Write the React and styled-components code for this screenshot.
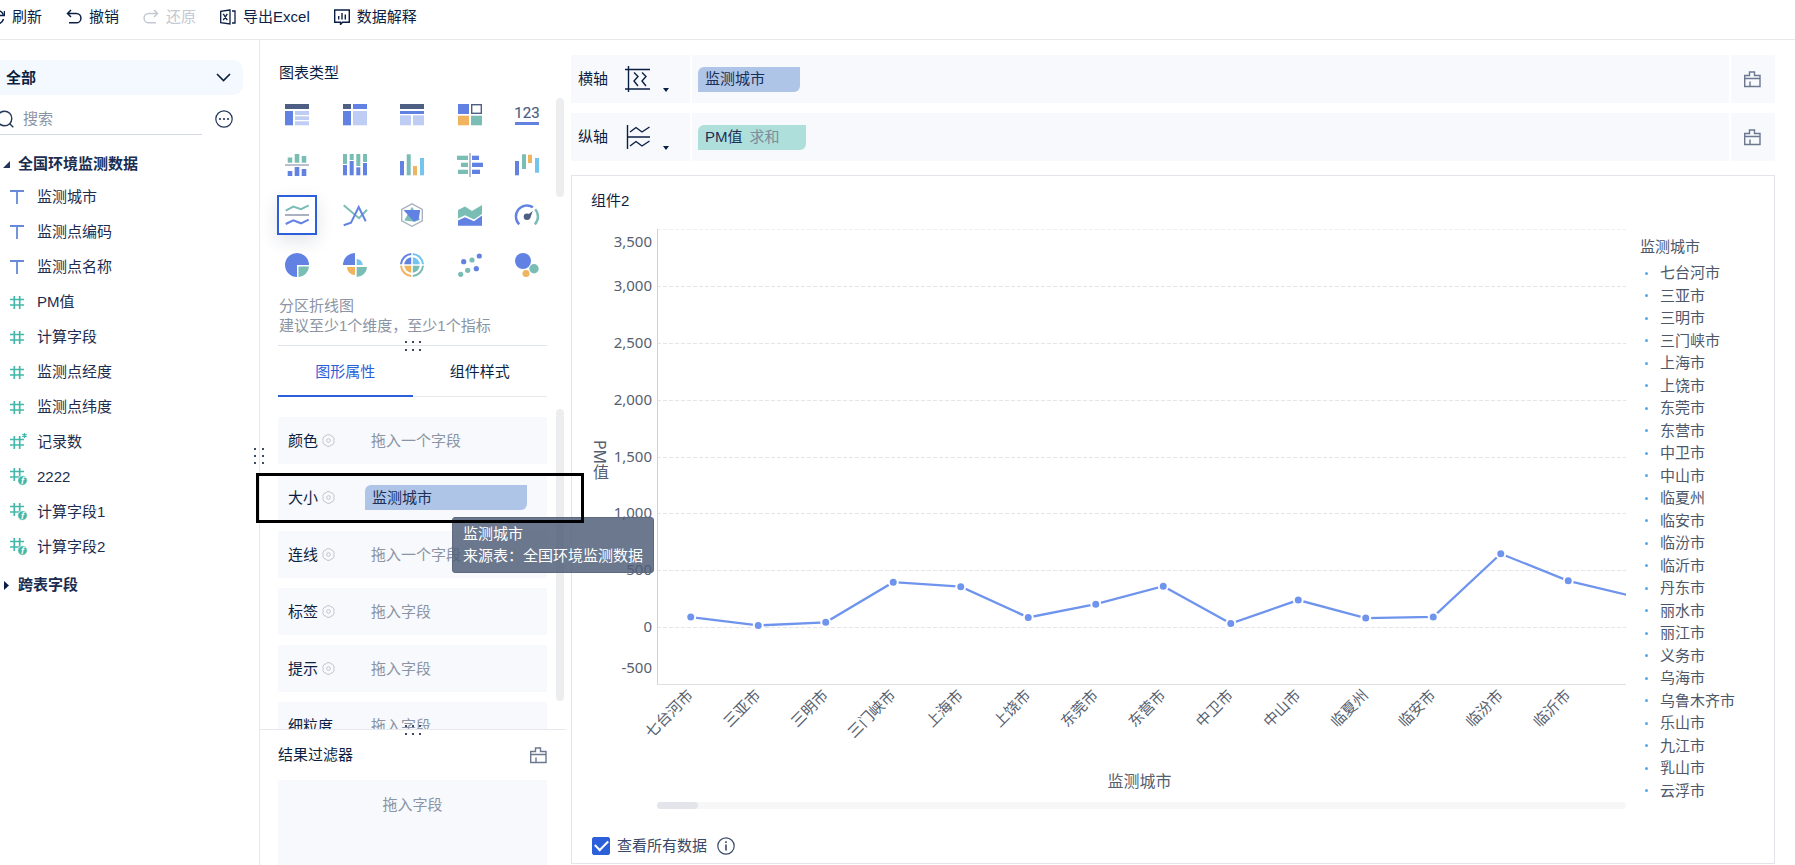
import React from "react";
import styled, { createGlobalStyle, css } from "styled-components";

const color = {
  ink: "#0b1f44",
  inkSoft: "#3a4a66",
  muted: "#8a94a5",
  disabled: "#c3c8d1",
  line: "#e6e8ec",
  panel: "#f7f9fc",
  primary: "#2c60db",
  blue: "#6282e3",
  light: "#bfcdf5",
  dark: "#4e5f84",
  teal: "#7abdb4",
  orange: "#f0b45e",
  sky: "#73c4ef",
  grey: "#a9b1c2",
};

const GlobalStyle = createGlobalStyle`
  * { box-sizing: border-box; }
  body {
    margin: 0;
    background: #fff;
    color: ${color.ink};
    font-family: "Liberation Sans", "Noto Sans CJK SC", sans-serif;
    font-size: 15px;
    line-height: 20px;
  }
  button, input, select { font: inherit; color: inherit; }
  ul, h2, h3, p { margin: 0; padding: 0; font: inherit; list-style: none; }
  svg { display: block; flex: none; }
`;

/* ---------- shared parts ---------- */

const PlainButton = styled.button`
  display: flex;
  align-items: center;
  padding: 0;
  border: 0;
  background: none;
  cursor: pointer;
`;

const Page = styled.div`
  display: flex;
  flex-direction: column;
  height: 100vh;
  min-height: 860px;
  overflow: hidden;
`;

const Main = styled.main`
  display: flex;
  flex: 1;
  min-height: 0;
`;

const HandleGrid = styled.span`
  position: absolute;
  z-index: 2;
  display: grid;
  grid-template-columns: repeat(${(p) => (p.$upright ? 2 : 3)}, 2px);
  gap: ${(p) => (p.$upright ? "5px 6px" : "6px 5px")};
  ${(p) =>
    p.$upright
      ? css`left: -6px; top: 408px;`
      : css`left: 50%; bottom: -6px; transform: translateX(-50%);`}
  & > i { width: 2px; height: 2px; background: ${color.inkSoft}; }
`;

const Handle = ({ upright }) => (
  <HandleGrid $upright={upright}>
    {Array.from({ length: 6 }, (_, i) => <i key={i} />)}
  </HandleGrid>
);

const ScrollThumb = styled.div`
  width: 8px;
  height: ${(p) => p.$length}px;
  margin-top: ${(p) => p.$top}px;
  border-radius: 4px;
  background: #ecedef;
`;

const CleanIcon = () => (
  <svg width="17" height="17" viewBox="0 0 17 17" fill="none" stroke="#6b7890" strokeWidth="1.4">
    <path d="M5.500 4.500V1h5v3.500H16V15.500H.7V4.500zM.7 7.500H16M6 10.500v5" />
  </svg>
);

/* ---------- toolbar ---------- */

const Toolbar = styled.header`
  display: flex;
  align-items: center;
  gap: 24px;
  height: 40px;
  padding-bottom: 5px;
  margin-left: -11px;
  border-bottom: 1px solid ${color.line};
`;

const ToolButton = styled(PlainButton)`
  gap: 7px;
  color: ${color.ink};
  white-space: nowrap;
  &:disabled { color: ${color.disabled}; cursor: default; }
`;

const ToolSvg = (props) => (
  <svg width="16" height="16" viewBox="0 0 16 16" fill="none" stroke="currentColor" strokeWidth="1.500" {...props} />
);

const tools = [
  {
    label: "刷新",
    icon: <ToolSvg><path d="M14.200 5.500A7 7 0 1 0 14.500 10M15.500 2v4.500h-4.500" /></ToolSvg>,
  },
  {
    label: "撤销",
    icon: <ToolSvg><path d="M5 1 1.500 4.500 5 8M1.500 4.500h8.800a4.600 4.600 0 0 1 0 9.300H3" /></ToolSvg>,
  },
  {
    label: "还原",
    disabled: true,
    icon: <ToolSvg><path d="M11 1l3.500 3.500L11 8M14.500 4.500H5.700a4.600 4.600 0 0 0 0 9.300H13" /></ToolSvg>,
  },
  {
    label: "导出Excel",
    icon: (
      <ToolSvg strokeWidth="1.300">
        <path d="M10 1 .7 2.300v11.400L10 15zM3.300 4.800l4 6.400M7.300 4.800l-4 6.400M12 2h3v12h-3" />
      </ToolSvg>
    ),
  },
  {
    label: "数据解释",
    icon: (
      <ToolSvg strokeWidth="1.400">
        <path d="M.7 1h14.600v12.300H8.500L6.500 15.500v-2.200H.7zM4.700 7v3.500M8 4v6.500M11.300 5.500v5" />
      </ToolSvg>
    ),
  },
];

/* ---------- field sidebar ---------- */

const Sidebar = styled.aside`
  flex: none;
  width: 260px;
  padding-top: 20px;
  border-right: 1px solid ${color.line};
  overflow: hidden;
`;

const ScopeBox = styled.label`
  display: flex;
  align-items: center;
  position: relative;
  height: 35px;
  margin-right: 16px;
  border-radius: 0 10px 10px 0;
  background: #f3f9fe;
  & > svg { position: absolute; right: 12px; pointer-events: none; }
`;

const ScopeSelect = styled.select`
  flex: 1;
  height: 35px;
  padding: 0 6px;
  border: 0;
  background: none;
  appearance: none;
  font-weight: 700;
`;

const SearchRow = styled.div`
  display: flex;
  align-items: center;
  justify-content: space-between;
  height: 32px;
  margin: 8px 26px 0 0;
`;

const SearchBox = styled.label`
  display: flex;
  align-items: center;
  gap: 9px;
  width: 202px;
  height: 32px;
  border-bottom: 1px solid #d5dae2;
  & > svg { margin-left: -4px; }
`;

const SearchInput = styled.input`
  flex: 1;
  min-width: 0;
  padding: 0;
  border: 0;
  outline: 0;
  background: none;
  &::placeholder { color: ${color.muted}; opacity: 1; }
`;

const GroupTitle = styled(PlainButton)`
  gap: 8px;
  height: 30px;
  margin-top: ${(p) => p.$gap}px;
  padding-left: 3px;
  color: #1a2c50;
  font-weight: 700;
  & > svg { width: 7px; }
`;

const FieldItem = styled.li`
  display: flex;
  align-items: center;
  gap: 9px;
  height: 35px;
  padding-left: 10px;
  color: #1c2d50;
`;

const HASH = "#44b8a8";

const FieldIcon = ({ kind }) => {
  if (kind === "text")
    return (
      <svg width="18" height="18" viewBox="0 0 18 18" fill="none" stroke="#6689d8" strokeWidth="1.800">
        <path d="M0 3h14M7 3v13" />
      </svg>
    );
  const up = kind === "calc" ? -3 : 0;
  return (
    <svg width="18" height="18" viewBox="0 0 18 18" fill="none" stroke={HASH} strokeWidth="1.700">
      <path d="M0 6.500h14M0 12h14M4.300 3v13M9.700 3v13" transform={`translate(0 ${up})`} />
      {kind === "count" && <path strokeWidth="1.200" d="M14.500 0v5M12.300 1.200l4.400 2.600M16.700 1.200l-4.400 2.600" />}
      {kind === "calc" && (
        <>
          <circle cx="12.500" cy="12.500" r="4.800" fill={HASH} stroke="#fff" strokeWidth="0.800" />
          <text x="12.500" y="15.500" textAnchor="middle" fontSize="9" fontWeight="700" fontStyle="italic" fill="#fff" stroke="none">f</text>
        </>
      )}
    </svg>
  );
};

const fields = [
  ["text", "监测城市"],
  ["text", "监测点编码"],
  ["text", "监测点名称"],
  ["number", "PM值"],
  ["number", "计算字段"],
  ["number", "监测点经度"],
  ["number", "监测点纬度"],
  ["count", "记录数"],
  ["calc", "2222"],
  ["calc", "计算字段1"],
  ["calc", "计算字段2"],
];

const FieldSidebar = () => (
  <Sidebar>
    <ScopeBox aria-label="字段范围">
      <ScopeSelect defaultValue="全部"><option>全部</option></ScopeSelect>
      <svg width="15" height="9" viewBox="0 0 15 9" fill="none" stroke={color.ink} strokeWidth="1.600">
        <path d="M1 1l6.500 6.500L14 1" />
      </svg>
    </ScopeBox>
    <SearchRow>
      <SearchBox>
        <svg width="18" height="18" viewBox="0 0 18 18" fill="none" stroke="#24365a" strokeWidth="1.400">
          <circle cx="8.500" cy="8.500" r="7.300" />
          <path d="M13.500 13.500l3.800 3.800" />
        </svg>
        <SearchInput placeholder="搜索" aria-label="搜索" />
      </SearchBox>
      <PlainButton aria-label="更多">
        <svg width="18" height="18" viewBox="0 0 18 18" fill="none" stroke="#24365a" strokeWidth="1.200">
          <circle cx="9" cy="9" r="8.200" />
          <g fill="#24365a" stroke="none">
            <circle cx="5" cy="9" r="1.100" /><circle cx="9" cy="9" r="1.100" /><circle cx="13" cy="9" r="1.100" />
          </g>
        </svg>
      </PlainButton>
    </SearchRow>
    <GroupTitle $gap={14}>
      <svg width="7" height="7" viewBox="0 0 7 7"><path d="M7 0v7H0z" fill="#24365a" /></svg>
      全国环境监测数据
    </GroupTitle>
    <ul>
      {fields.map(([kind, name]) => (
        <FieldItem key={name}><FieldIcon kind={kind} />{name}</FieldItem>
      ))}
    </ul>
    <GroupTitle $gap={6}>
      <svg width="7" height="9" viewBox="0 0 7 9"><path d="M1 0l5 4.500L1 9z" fill={color.ink} /></svg>
      跨表字段
    </GroupTitle>
  </Sidebar>
);

/* ---------- chart type picker ---------- */

const Bars = ({ list }) => list.map(([x, y, w, h, c], i) => <rect key={i} x={x} y={y} width={w} height={h} fill={color[c]} />);

const chartTypes = [
  ["分组表", <Bars list={[[0, 1, 24, 5, "dark"], [0, 8, 8, 14.300, "blue"], [10, 8, 14, 4, "light"], [10, 13.300, 14, 3.700, "light"], [10, 18.300, 14, 4, "light"]]} />],
  ["交叉表", <Bars list={[[0, 1, 8, 5, "dark"], [10, 1, 14, 5, "blue"], [0, 8, 8, 14.300, "blue"], [10, 8, 14, 14.300, "light"]]} />],
  ["明细表", <Bars list={[[0, 1, 24, 5, "dark"], [0, 8, 24, 3, "blue"], [0, 12.300, 11, 10, "light"], [13, 12.300, 11, 10, "light"]]} />],
  ["颜色表格", <>
    <Bars list={[[0, 1, 11, 10, "blue"], [0, 12.700, 11, 9.600, "orange"], [13, 12.700, 11, 9.600, "teal"]]} />
    <rect x="13.700" y="1.700" width="9.600" height="8.600" fill="none" stroke={color.dark} strokeWidth="1.400" />
  </>],
  ["指标卡", <>
    <text x="12" y="15" textAnchor="middle" fontFamily="'Liberation Sans Narrow', Roboto, sans-serif" fontSize="15" fill={color.dark} stroke={color.dark} strokeWidth="0.200">123</text>
    <rect y="19" width="24" height="3" fill={color.blue} />
  </>],
  ["分区柱形图", <Bars list={[[2.700, 4.500, 4.600, 5.200, "teal"], [9.700, 1, 4.600, 8.700, "teal"], [16.700, 3, 4.600, 6.700, "teal"], [0, 11.200, 24, 1.600, "grey"], [2.700, 18, 4.600, 5, "blue"], [9.700, 14, 4.600, 9, "blue"], [16.700, 16, 4.600, 7, "blue"]]} />],
  ["堆积柱形图", <Bars list={[[0, 1, 4, 10, "teal"], [0, 12, 4, 10.300, "blue"], [6.700, 1, 4, 6, "teal"], [6.700, 8, 4, 14.300, "blue"], [13.300, 1, 4, 12, "teal"], [13.300, 14.300, 4, 8, "blue"], [20, 1, 4, 8, "teal"], [20, 10, 4, 12.300, "blue"]]} />],
  ["多系列柱形图", <Bars list={[[0, 8, 4, 14.300, "blue"], [6.700, 1.300, 4, 21, "teal"], [13, 13, 4, 9.300, "orange"], [20, 5, 4, 17.300, "sky"]]} />],
  ["对比柱状图", <Bars list={[[-1, 2.700, 11, 4.300, "teal"], [3, 9.700, 7, 4.300, "teal"], [0, 16.700, 10, 4.300, "teal"], [11.200, 0, 1.600, 24, "grey"], [14, 2.700, 7, 4.300, "blue"], [14, 9.700, 11, 4.300, "blue"], [14, 16.700, 8, 4.300, "blue"]]} />],
  ["瀑布图", <Bars list={[[0, 8, 4, 14.300, "blue"], [7, 1.300, 4, 14.700, "teal"], [13, 1.700, 4, 8.300, "orange"], [20, 5, 4, 14.700, "sky"]]} />],
  ["分区折线图", <g fill="none" strokeWidth="2">
    <path stroke={color.teal} d="M.7 7.700l7.600-4.200 7.700 2.700 7.700-3.900" />
    <path stroke={color.grey} d="M0 12h24" />
    <path stroke={color.blue} d="M.7 21l7.600-3.700 7.700 3 7.700-3.600" />
  </g>],
  ["多系列折线图", <g fill="none" strokeWidth="2">
    <path stroke={color.teal} d="M.7 2.300l15.300 12.900 8-8.500" />
    <path stroke={color.blue} d="M.7 22.300l7.300-2.600 7.700-15.700 7 14.300" />
  </g>],
  ["雷达图", <>
    <path fill="none" stroke={color.grey} strokeWidth="1.400" d="M12 .8l10.300 5.500v11.500L12 23.300 1.700 17.800V6.300z" />
    <path fill={color.teal} d="M12 3.700l8 13-5 2-10.700-1.200z" />
    <path fill={color.blue} d="M3.500 7h16.700l-1.500 9.500-5 2z" />
  </>],
  ["面积图", <>
    <path fill={color.teal} d="M0 7l7-3.500 7 4.500 10-6v9l-8 5.500-9-4.200-7 3.200z" />
    <path fill={color.blue} d="M0 17.500l7-3.300 9 4 8-5.700v10.200H0z" />
  </>],
  ["仪表盘", <>
    <g fill="none" strokeWidth="2.400">
      <path stroke={color.blue} d="M4.200 21.300A11 11 0 0 1 18 4.300" />
      <path stroke={color.teal} d="M20.200 6.300A11 11 0 0 1 19.800 21.300" />
    </g>
    <path fill={color.dark} d="M17.800 8l-2.700 7.300-3-3z" />
    <circle cx="12" cy="13.700" r="3.300" fill={color.dark} />
  </>],
  ["饼图", <>
    <path fill={color.blue} d="M24 12A12 12 0 1 0 12 24V12z" />
    <path fill={color.teal} d="M13.500 13.500H24A11 11 0 0 1 13.500 24z" />
  </>],
  ["玫瑰图", <>
    <path fill={color.blue} d="M12 12H0A12 12 0 0 1 12 0z" />
    <path fill={color.sky} d="M13.700 12V6a6 6 0 0 1 6 6z" />
    <path fill={color.orange} d="M12 14v8a8 8 0 0 1-8-8z" />
    <path fill={color.teal} d="M13.700 14H24A10.300 10.300 0 0 1 13.700 24z" />
  </>],
  ["多层饼图", <>
    {[["blue", 0], ["sky", 90], ["teal", 180], ["orange", 270]].map(([c, a]) => (
      <g key={c} transform={`rotate(${a} 12 12)`}>
        <path fill={color[c]} d="M11.200 11.200H4.300A7.500 7.500 0 0 1 11.200 4.300z" />
        <path fill="none" stroke={color[c]} strokeWidth="2" d="M1 11.200A11 11 0 0 1 11.200 1" />
      </g>
    ))}
  </>],
  ["散点图", <>
    {[[2.700, 21.300, "teal"], [9.700, 17.300, "teal"], [18.300, 15.700, "blue"], [5.700, 8.700, "blue"], [14, 7, "teal"], [21.300, 3, "blue"]].map(([x, y, c]) => (
      <circle key={x} cx={x} cy={y} r="2.600" fill={color[c]} />
    ))}
  </>],
  ["聚合气泡图", <>
    <circle cx="8" cy="8" r="8" fill={color.blue} />
    <circle cx="19" cy="15.700" r="4.700" fill={color.teal} />
    <circle cx="11" cy="20.500" r="3.500" fill={color.orange} />
  </>],
];

const ConfigColumn = styled.section`
  position: relative;
  display: flex;
  flex-direction: column;
  flex: none;
  width: 311px;
`;

const TypeSection = styled.div`
  padding: 23px 7px 0 17px;
`;

const SectionTitle = styled.h2`
  padding-left: 2px;
`;

const ScrollRow = styled.div`
  display: flex;
  justify-content: space-between;
`;

const TypeGrid = styled.div`
  display: grid;
  grid-template-columns: repeat(5, 40px);
  justify-content: space-between;
  row-gap: 10px;
  width: 270px;
  margin-top: 12px;
`;

const TypeButton = styled(PlainButton)`
  justify-content: center;
  width: 40px;
  height: 40px;
  border: 2px solid ${(p) => (p.$active ? color.primary : "transparent")};
  box-shadow: ${(p) => (p.$active ? "0 6px 18px rgba(9, 30, 64, 0.12)" : "none")};
  & > svg { overflow: visible; }
`;

const Hint = styled.p`
  position: relative;
  width: 269px;
  margin: 11px 0 0 1px;
  padding: 0 1px 9px;
  border-bottom: 1px solid #dfe4ea;
  color: ${color.muted};
`;

const TabBar = styled.div`
  display: flex;
  width: 269px;
  margin-left: 18px;
  box-shadow: inset 0 -1px ${color.line};
`;

const Tab = styled(PlainButton)`
  flex: 1;
  justify-content: center;
  height: 51px;
  padding-top: 2px;
  border-bottom: 2px solid ${(p) => (p.$active ? color.primary : "transparent")};
  color: ${(p) => (p.$active ? color.primary : color.ink)};
`;

const PropsArea = styled.div`
  position: relative;
  flex: 1;
  min-height: 0;
  border-bottom: 1px solid ${color.line};
  margin-right: 5px;
`;

const PropsScroll = styled.div`
  display: flex;
  justify-content: space-between;
  height: 100%;
  padding: 0 2px 0 18px;
  overflow: hidden;
`;

const PropsList = styled.div`
  display: flex;
  flex-direction: column;
  gap: 10px;
  width: 269px;
  padding-top: 20px;
`;

const PropRow = styled.div`
  display: flex;
  flex: none;
  align-items: center;
  height: 47px;
  padding: 0 20px 0 10px;
  background: ${color.panel};
`;

const PropLabel = styled.span`
  display: flex;
  align-items: center;
  gap: 4px;
  width: 77px;
  white-space: nowrap;
`;

const Placeholder = styled.span`
  padding-left: 6px;
  color: ${color.muted};
`;

const Tag = styled(PlainButton)`
  gap: 7px;
  height: 25px;
  width: ${(p) => (p.$width ? `${p.$width}px` : "auto")};
  flex: ${(p) => (p.$width ? "none" : 1)};
  padding-left: 7px;
  border-radius: 6px 0 6px 0;
  background: ${(p) => (p.$measure ? "#aedfda" : "#afc5e8")};
  color: #1c2f57;
  & > small { font-size: 15px; color: #7d8b9c; }
`;

/* Six rounded teeth: two outer points per tooth with a shallow notch between teeth. */
const gearPath = `M${Array.from({ length: 18 }, (_, i) => {
  const degrees = Math.floor(i / 3) * 60 + [15, 45, 60][i % 3];
  const radius = [6, 6, 5.200][i % 3];
  const angle = (degrees * Math.PI) / 180;
  return `${(6.500 + radius * Math.cos(angle)).toFixed(2)} ${(6.500 + radius * Math.sin(angle)).toFixed(2)}`;
}).join("L")}z`;

const GearIcon = () => (
  <svg width="13" height="13" viewBox="0 0 13 13" fill="none" stroke="#bfc5cf" strokeWidth="1" strokeLinejoin="round">
    <path d={gearPath} />
    <circle cx="6.500" cy="6.500" r="1.800" />
  </svg>
);

const chartProps = [
  { label: "颜色", hint: "拖入一个字段" },
  { label: "大小", tag: "监测城市" },
  { label: "连线", hint: "拖入一个字段" },
  { label: "标签", hint: "拖入字段" },
  { label: "提示", hint: "拖入字段" },
  { label: "细粒度", hint: "拖入字段", plain: true },
];

const Highlight = styled.div`
  position: absolute;
  z-index: 4;
  left: -4px;
  top: 76px;
  width: 328px;
  height: 50px;
  border: 3px solid #000;
  pointer-events: none;
`;

const Tooltip = styled.div`
  position: absolute;
  z-index: 3;
  left: 192px;
  top: 120px;
  padding: 5px 10px;
  border: 1px solid #5e6a80;
  border-radius: 3px;
  background: rgba(79, 94, 119, 0.84);
  color: #fff;
  line-height: 22px;
  white-space: nowrap;
`;

const FilterSection = styled.div`
  padding: 15px 24px 0 18px;
`;

const FilterHead = styled.div`
  display: flex;
  align-items: center;
  justify-content: space-between;
`;

const FilterDrop = styled.div`
  height: 85px;
  margin-top: 15px;
  padding-top: 15px;
  background: ${color.panel};
  color: ${color.muted};
  text-align: center;
`;

const Config = () => (
  <ConfigColumn>
    <Handle upright />
    <TypeSection>
      <SectionTitle>图表类型</SectionTitle>
      <ScrollRow>
        <TypeGrid>
          {chartTypes.map(([name, art]) => (
            <TypeButton key={name} aria-label={name} $active={name === "分区折线图"}>
              <svg width="24" height="24" viewBox="0 0 24 24">{art}</svg>
            </TypeButton>
          ))}
        </TypeGrid>
        <ScrollThumb $length={99} $top={15} />
      </ScrollRow>
      <Hint>
        分区折线图<br />建议至少1个维度，至少1个指标
        <Handle />
      </Hint>
    </TypeSection>
    <TabBar>
      <Tab $active>图形属性</Tab>
      <Tab>组件样式</Tab>
    </TabBar>
    <PropsArea>
      <PropsScroll>
        <PropsList>
          {chartProps.map(({ label, hint, tag, plain }) => (
            <PropRow key={label}>
              <PropLabel>{label}{!plain && <GearIcon />}</PropLabel>
              {tag ? <Tag>{tag}</Tag> : <Placeholder>{hint}</Placeholder>}
            </PropRow>
          ))}
        </PropsList>
        <ScrollThumb $length={292} $top={12} />
      </PropsScroll>
      <Handle />
      <Tooltip role="tooltip">监测城市<br />来源表：全国环境监测数据</Tooltip>
      <Highlight />
    </PropsArea>
    <FilterSection>
      <FilterHead>
        <h2>结果过滤器</h2>
        <PlainButton aria-label="清空过滤器"><CleanIcon /></PlainButton>
      </FilterHead>
      <FilterDrop>拖入字段</FilterDrop>
    </FilterSection>
  </ConfigColumn>
);

/* ---------- axis rows ---------- */

const Workspace = styled.section`
  display: flex;
  flex-direction: column;
  flex: 1;
  min-width: 0;
  padding: 15px 20px 1px 0;
`;

const AxisRow = styled.div`
  display: flex;
  height: 48px;
  margin-bottom: ${(p) => p.$gap}px;
  background: ${color.panel};
`;

const AxisCell = styled.div`
  display: flex;
  align-items: center;
  flex: none;
  gap: 17px;
  width: 121px;
  padding-left: 7px;
  border-right: 2px solid #fff;
`;

const AxisMode = styled(PlainButton)`
  gap: 12px;
  align-items: flex-end;
`;

const DropZone = styled.div`
  display: flex;
  align-items: center;
  flex: 1;
  padding-left: 6px;
`;

const ClearCell = styled.div`
  display: grid;
  place-content: center;
  width: 46px;
  padding-right: 2px;
  border-left: 2px solid #fff;
`;

const AxisLine = ({ label, art, gap, children }) => (
  <AxisRow $gap={gap}>
    <AxisCell>
      {label}
      <AxisMode aria-label={`${label}设置`}>
        <svg width="26" height="26" viewBox="0 0 26 26" fill="none" stroke={color.ink} strokeWidth="1.400">{art}</svg>
        <svg width="6" height="4" viewBox="0 0 6 4"><path d="M0 0h6L3 4z" fill={color.ink} /></svg>
      </AxisMode>
    </AxisCell>
    <DropZone>{children}</DropZone>
    <ClearCell><PlainButton aria-label={`清空${label}`}><CleanIcon /></PlainButton></ClearCell>
  </AxisRow>
);

/* ---------- chart card ---------- */

const Card = styled.article`
  display: flex;
  flex-direction: column;
  flex: 1;
  min-height: 0;
  padding: 15px 0 0 19px;
  border: 1px solid #e3e5ea;
`;

const CardBody = styled.div`
  display: flex;
  flex: 1;
  min-height: 0;
`;

const ChartPane = styled.div`
  flex: 1;
  min-width: 0;
  padding-top: 17px;
`;

const ChartSvg = styled.svg`
  width: 100%;
  font-family: "Noto Sans", "Noto Sans CJK SC", sans-serif;
  font-size: 15px;
  fill: #565f70;
`;

const AxisTitle = styled.text`
  font-size: 16px;
  text-anchor: middle;
  writing-mode: ${(p) => (p.$vertical ? "vertical-rl" : "horizontal-tb")};
`;

const ZoomTrack = styled.div`
  height: 7px;
  margin: 11px 0 0 66px;
  border-radius: 4px;
  background: #f7f7f8;
  &::before {
    content: "";
    display: block;
    width: 41px;
    height: 7px;
    border-radius: 4px;
    background: #e4e5ea;
  }
`;

const Legend = styled.aside`
  flex: none;
  width: 148px;
  padding: 26px 0 0 14px;
  color: #4d5769;
`;

const LegendList = styled.ul`
  display: flex;
  flex-direction: column;
  justify-content: space-between;
  height: 538px;
  margin-top: 6px;
`;

const LegendItem = styled.li`
  display: flex;
  align-items: center;
  gap: 12px;
  padding-left: 5px;
  &::before {
    content: "";
    width: 3px;
    height: 3px;
    border-radius: 50%;
    background: #55a9ea;
  }
`;

const CardFoot = styled.div`
  display: flex;
  align-items: center;
  gap: 10px;
  height: 35px;
  color: ${color.inkSoft};
`;

const CheckLabel = styled.label`
  display: flex;
  align-items: center;
  gap: 7px;
`;

const Checkbox = styled.input`
  display: grid;
  place-content: center;
  width: 18px;
  height: 18px;
  margin: 0 0 0 1px;
  border-radius: 2px;
  appearance: none;
  border: 1px solid ${color.primary};
  &:checked { background: ${color.primary}; }
  &:checked::before {
    content: "";
    width: 11px;
    height: 6px;
    margin-bottom: 3px;
    border: solid #fff;
    border-width: 0 0 2px 2px;
    transform: rotate(-45deg);
  }
`;

const PLOT_LEFT = 66;
const PLOT_HEIGHT = 455;
const STEP = 67.500;
const yOf = (value) => 1 + ((3500 - value) / 4000) * PLOT_HEIGHT;
const xOf = (index) => PLOT_LEFT + STEP * (index + 0.500);

const series = [
  ["七台河市", 88], ["三亚市", 15], ["三明市", 42], ["三门峡市", 395], ["上海市", 356], ["上饶市", 85], ["东莞市", 202],
  ["东营市", 360], ["中卫市", 32], ["中山市", 238], ["临夏州", 80], ["临安市", 90], ["临汾市", 645], ["临沂市", 407], ["丹东市", 265],
];

const cities = [
  "七台河市", "三亚市", "三明市", "三门峡市", "上海市", "上饶市", "东莞市", "东营市", "中卫市", "中山市", "临夏州", "临安市",
  "临汾市", "临沂市", "丹东市", "丽水市", "丽江市", "义务市", "乌海市", "乌鲁木齐市", "乐山市", "九江市", "乳山市", "云浮市",
];

const ticks = [3500, 3000, 2500, 2000, 1500, 1000, 500, 0, -500];

const LineChart = () => {
  const bottom = yOf(-500);
  return (
    <ChartSvg height="563" role="img" aria-label="各监测城市PM值折线图">
      <AxisTitle $vertical x="9" y="232" dominantBaseline="central">PM值</AxisTitle>
      {ticks.map((tick) => {
        const y = Math.round(yOf(tick)) + 0.500;
        const shift = tick === 3500 ? 12 : tick === -500 ? -17 : -1;
        return (
          <g key={tick}>
            {tick !== -500 && (
              <line x1={PLOT_LEFT} x2="100%" y1={y} y2={y} stroke={tick === 3500 ? "#f0f0f1" : "#e4e5e7"} strokeDasharray="4 2" />
            )}
            <text x="61" y={y + shift + 5} textAnchor="end">{tick.toLocaleString("en-US")}</text>
          </g>
        );
      })}
      <line x1={PLOT_LEFT + 0.500} x2={PLOT_LEFT + 0.500} y1="1" y2={bottom} stroke="#cfd1d4" />
      <line x1={PLOT_LEFT} x2="100%" y1={bottom + 0.500} y2={bottom + 0.500} stroke="#dfe0e3" />
      <polyline
        fill="none"
        stroke="#6f94ee"
        strokeWidth="2.300"
        points={series.map(([, v], i) => `${xOf(i)},${yOf(v)}`).join(" ")}
      />
      {series.slice(0, 14).map(([name, v], i) => (
        <g key={name}>
          <circle cx={xOf(i)} cy={yOf(v)} r="4.500" fill="#6f94ee" stroke="#fff" strokeWidth="2" />
          <text
            textAnchor="end"
            dominantBaseline="central"
            transform={`translate(${xOf(i) - 1} ${bottom + 8}) rotate(-45)`}
          >
            {name}
          </text>
        </g>
      ))}
      <AxisTitle x="53%" y="559">监测城市</AxisTitle>
    </ChartSvg>
  );
};

export default function App() {
  return (
    <Page>
      <GlobalStyle />
      <Toolbar>
        {tools.map(({ label, icon, disabled }) => (
          <ToolButton key={label} disabled={disabled}>{icon}{label}</ToolButton>
        ))}
      </Toolbar>
      <Main>
        <FieldSidebar />
        <Config />
        <Workspace>
          <AxisLine label="横轴" gap={10} art={<path d="M0 3.500h25M0 23h25M3.500 0v26M9 6.500l4 4-4 4.500 4 5M17 6.500l4 4-4 4.500 4 5" />}>
            <Tag $width={102}>监测城市</Tag>
          </AxisLine>
          <AxisLine label="纵轴" gap={14} art={<path d="M2.500 1v24M2.500 13H25M5 8l6-4.500 6 4.500 7.500-5M5 22l6-4.500 6 4.500 7.500-5" />}>
            <Tag $width={108} $measure>PM值<small>求和</small></Tag>
          </AxisLine>
          <Card>
            <h3>组件2</h3>
            <CardBody>
              <ChartPane>
                <LineChart />
                <ZoomTrack />
              </ChartPane>
              <Legend>
                <h3>监测城市</h3>
                <LegendList>
                  {cities.map((city) => <LegendItem key={city}>{city}</LegendItem>)}
                </LegendList>
              </Legend>
            </CardBody>
            <CardFoot>
              <CheckLabel><Checkbox type="checkbox" defaultChecked />查看所有数据</CheckLabel>
              <PlainButton aria-label="说明">
                <svg width="18" height="18" viewBox="0 0 18 18" fill="none" stroke={color.inkSoft} strokeWidth="1.200">
                  <circle cx="9" cy="9" r="8.200" />
                  <path d="M9 7.500v6M9 4.300v1.600" strokeWidth="1.600" />
                </svg>
              </PlainButton>
            </CardFoot>
          </Card>
        </Workspace>
      </Main>
    </Page>
  );
}
